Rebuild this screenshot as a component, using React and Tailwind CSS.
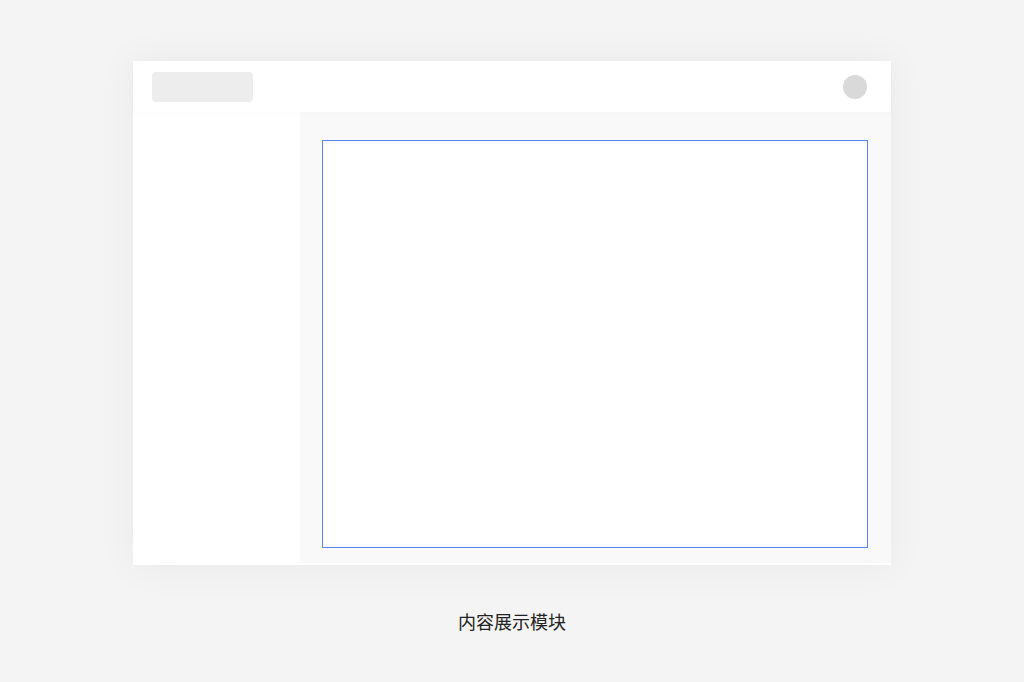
import React from 'react';

export default function App() {
  return (
    <div
      className="min-h-screen w-full bg-[#f4f4f4] flex flex-col items-center pt-[61px]"
      style={{ fontFamily: '"Noto Sans", "Noto Sans CJK SC", sans-serif' }}
    >
      {/* 窗口框架 */}
      <div className="w-[758px] h-[504px] flex flex-col bg-white shadow-[0_0_40px_rgba(0,0,0,0.05)]">
        <div className="h-[51px] shrink-0 flex items-center justify-between pl-[19px] pr-[24px] bg-white relative z-10 shadow-[0_2px_8px_rgba(0,0,0,0.02)]">
          <div className="w-[101px] h-[30px] rounded-[4px] bg-[#ededed]" />
          <div className="w-[24px] h-[24px] rounded-full bg-[#d9d9d9]" />
        </div>
        <div className="flex flex-1 min-h-0">
          <div className="w-[167px] shrink-0 bg-white" />
          <div className="flex-1 bg-[#f9f9f9] pl-[22px] pt-[28px] pr-[23px] pb-[15px] mb-[2px]">
            <div className="w-full h-full bg-white border border-[#5585e8]" />
          </div>
        </div>
      </div>

      <div className="mt-[44px] text-[18px] leading-[26px] text-[#222222]">
        内容展示模块
      </div>
    </div>
  );
}
